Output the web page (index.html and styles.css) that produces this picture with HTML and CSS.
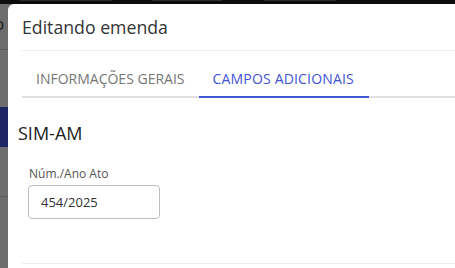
FILE: index.html
```html
<!DOCTYPE html>
<html lang="pt-BR">
<head>
<meta charset="utf-8">
<link rel="stylesheet" href="styles.css">
</head>
<body>
<div class="backdrop">
  <div class="topbar">
    <span class="ghost g1"></span>
    <span class="ghost g2"></span>
    <span class="ghost g3"></span>
  </div>
  <div class="main">
    <div class="side">
      <div class="side-item s1"><span class="side-letter">o</span></div>
      <div class="side-gap1"></div>
      <div class="side-item s2"></div>
      <div class="side-gap2"></div>
      <div class="side-rest"></div>
    </div>
    <div class="modal">
      <h1 class="title">Editando emenda</h1>
      <div class="tabs">
        <div class="tab">INFORMAÇÕES GERAIS</div>
        <div class="tab active">CAMPOS ADICIONAIS</div>
      </div>
      <div class="content">
        <h2 class="section">SIM-AM</h2>
        <label class="label">Núm./Ano Ato</label>
        <div class="input">454/2025</div>
      </div>
      <div class="footer"></div>
    </div>
  </div>
</div>
</body>
</html>
```

FILE: styles.css
```css
* { box-sizing: border-box; }
html, body { margin: 0; padding: 0; }
body {
  width: 455px;
  height: 268px;
  overflow: hidden;
  font-family: "Open Sans", "Noto Sans", sans-serif;
  background: #6b6b6b;
}
.backdrop {
  display: flex;
  flex-direction: column;
  height: 268px;
}
.topbar {
  height: 4px;
  background: #0c0c0e;
  overflow: hidden;
  position: relative;
  flex: none;
}
.ghost {
  position: absolute;
  top: 0;
  height: 1px;
  background: #2c2c30;
}
.g1 { left: 20px; width: 92px; }
.g2 { left: 152px; width: 70px; }
.g3 { left: 264px; width: 72px; }
.main {
  flex: 1;
  display: flex;
}
.side {
  width: 8px;
  flex: none;
  display: flex;
  flex-direction: column;
  background: #6d6d6d;
}
.side-item.s1 {
  height: 46px;
  border-bottom: 1px solid #5c5c5c;
  position: relative;
  overflow: hidden;
}
.side-letter {
  position: absolute;
  left: -6px;
  top: 9px;
  font-size: 17px;
  line-height: 22px;
  color: #1a1a1a;
}
.side-gap1 { height: 57px; }
.side-item.s2 {
  height: 40px;
  background: #1f2465;
}
.side-gap2 {
  height: 50px;
  border-bottom: 1px solid #5c5c5c;
}
.side-rest { flex: 1; }
.modal {
  flex: 1;
  background: #fff;
  border-top-left-radius: 6px;
  padding: 0 0 0 14px;
  display: flex;
  flex-direction: column;
}
.title {
  margin: 0;
  height: 47px;
  border-bottom: 1px solid #eeeeee;
  font-size: 17.7px;
  font-weight: 400;
  color: #333;
  line-height: 46px;
}
.tabs {
  display: flex;
  border-bottom: 2px solid #e0e0e0;
  height: 47px;
  flex: none;
}
.tab {
  padding: 18px 14px 0 14px;
  font-size: 14px;
  line-height: 20px;
  color: #767676;
  white-space: nowrap;
}
.tab.active {
  color: #4254d6;
  border-bottom: 2px solid #4254d6;
  margin-bottom: -2px;
  letter-spacing: 0.18px;
  padding-right: 15px;
}
.content {
  flex: 1;
  margin-left: -4px;
}
.section {
  margin: 23px 0 0 0;
  font-size: 18px;
  font-weight: 400;
  color: #222;
  line-height: 24px;
}
.label {
  display: block;
  margin: 21px 0 0 11px;
  font-size: 12px;
  color: #555;
  line-height: 16px;
}
.input {
  margin: 3px 0 0 10px;
  width: 132px;
  height: 34px;
  border: 1px solid #bdbdbd;
  border-radius: 4px;
  font-size: 13px;
  color: #333;
  line-height: 32px;
  padding-left: 12px;
}
.footer {
  height: 5px;
  border-top: 1px solid #eeeeee;
}
```
